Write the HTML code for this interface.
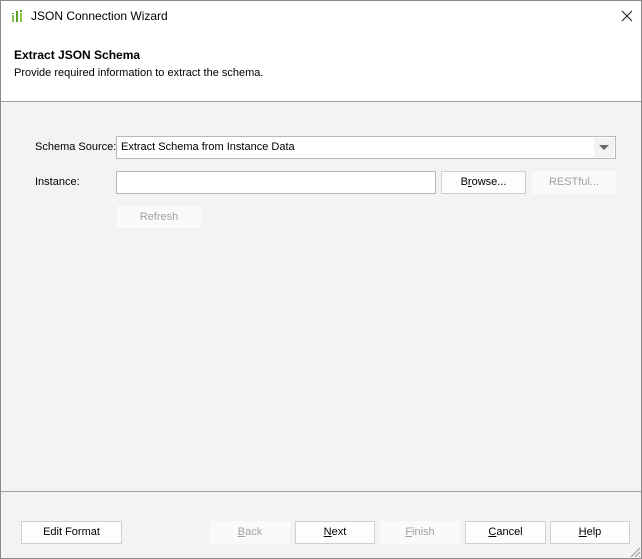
<!DOCTYPE html><html><head><style>
body{margin:0;width:642px;height:559px;overflow:hidden;font-family:"Liberation Sans",sans-serif;font-size:11px;color:#000}
.win{position:absolute;left:0;top:0;width:640px;height:557px;border:1px solid #8a8a8a;background:#f3f3f3}
.top{position:absolute;left:0;top:0;width:640px;height:100px;background:#fff;border-bottom:1px solid #a0a0a0}
.a{position:absolute;white-space:nowrap}
.btn{position:absolute;height:21px;border:1px solid #cfcfcf;background:#fdfdfd;text-align:center;line-height:21px;box-sizing:content-box}
.dis{border-color:#fafafa;background:#fafafa;color:#a0a0a0}
u{text-decoration:underline}
</style></head><body><div class="win">
<div class="top">
<svg class="a" style="left:10px;top:7px" width="14" height="16"><rect x="1" y="7" width="2" height="7" fill="#8bc34a"/><rect x="5" y="3" width="2" height="11" fill="#5a9e2a"/><rect x="9" y="5" width="2" height="9" fill="#8bc34a"/><rect x="1" y="5" width="2" height="1" fill="#5a9e2a"/><rect x="9" y="2" width="2" height="2" fill="#5a9e2a"/></svg>
<div class="a" style="left:30px;top:8px;font-size:12px">JSON Connection Wizard</div>
<svg class="a" style="left:620px;top:9px" width="12" height="12"><path d="M1 1L11 11M11 1L1 11" stroke="#222" stroke-width="1.1"/></svg>
<div class="a" style="left:13px;top:47px;font-weight:bold;font-size:12px">Extract JSON Schema</div>
<div class="a" style="left:13px;top:66px">Provide required information to extract the schema.</div>
</div>
<div class="a" style="left:34px;top:140px">Schema Source:</div>
<div class="a" style="left:115px;top:135px;width:498px;height:21px;border:1px solid #b8b8b8;background:#fff"><span class="a" style="left:4px;top:4px">Extract Schema from Instance Data</span><div class="a" style="right:1px;top:1px;width:20px;height:19px;background:#f2f2f2"></div><div class="a" style="right:6px;top:8px;border-left:5px solid transparent;border-right:5px solid transparent;border-top:5px solid #666"></div></div>
<div class="a" style="left:34px;top:175px">Instance:</div>
<div class="a" style="left:115px;top:170px;width:318px;height:21px;border:1px solid #b8b8b8;background:#fff"></div>
<div class="btn" style="left:440px;top:170px;width:83px">B<u>r</u>owse...</div>
<div class="btn dis" style="left:531px;top:170px;width:82px">RESTful...</div>
<div class="btn dis" style="left:116px;top:205px;width:82px;height:20px;line-height:20px">Refresh</div>
<div class="a" style="left:0;top:490px;width:640px;border-top:1px solid #a0a0a0"></div>
<div class="btn" style="left:20px;top:520px;width:99px">Edit Format</div>
<div class="btn dis" style="left:209px;top:520px;width:78px"><u>B</u>ack</div>
<div class="btn" style="left:294px;top:520px;width:78px"><u>N</u>ext</div>
<div class="btn dis" style="left:379px;top:520px;width:78px"><u>F</u>inish</div>
<div class="btn" style="left:464px;top:520px;width:79px"><u>C</u>ancel</div>
<div class="btn" style="left:549px;top:520px;width:78px"><u>H</u>elp</div>
<svg class="a" style="left:628px;top:545px" width="12" height="12"><path d="M11 2L2 11M11 6L6 11M11 10L10 11" stroke="#999"/></svg>
</div></body></html>
